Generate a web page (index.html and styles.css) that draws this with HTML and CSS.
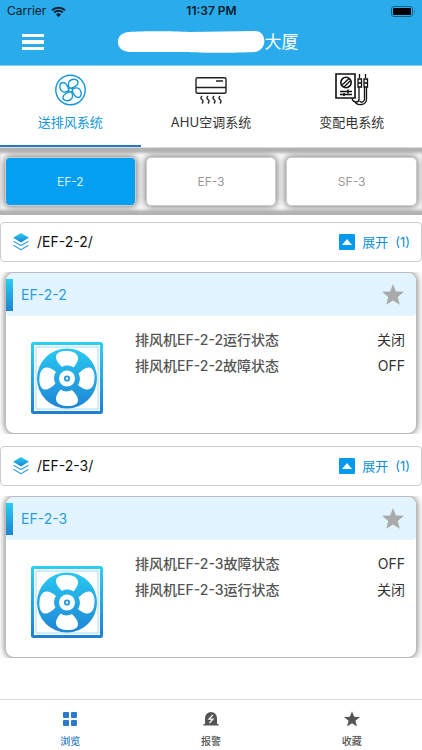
FILE: index.html
```html
<!DOCTYPE html>
<html lang="zh-CN">
<head>
<meta charset="utf-8">
<meta name="viewport" content="width=device-width, initial-scale=1">
<title>大厦</title>
<link rel="stylesheet" href="styles.css">
</head>
<body>
<svg class="defs" aria-hidden="true">
  <defs>
    <linearGradient id="blue" x1="0" y1="0" x2="0" y2="1"><stop offset="0" stop-color="#2bd0f3"/><stop offset="1" stop-color="#1e7fd3"/></linearGradient>
    <linearGradient id="fanblue" gradientUnits="userSpaceOnUse" x1="0" y1="0" x2="0" y2="72"><stop offset="0" stop-color="#2bd0f3"/><stop offset="1" stop-color="#1e7fd3"/></linearGradient>
    <symbol id="star" viewBox="0 0 22 21"><path d="M11 0l2.9 7.4 8.1.4-6.300 5.100 2.100 7.900L11 16.400 4.200 20.800l2.100-7.900L0 7.800l8.100-.4z"/></symbol>
    <symbol id="layers" viewBox="0 0 16 18">
      <path fill="url(#blue)" d="M8 0l8 4.700-8 4.700-8-4.700z"/>
      <path fill="none" stroke="#3fa5e4" stroke-width="1.300" d="M.5 8.300L8 12.600l7.500-4.300M.5 12.300L8 16.800l7.500-4.500"/>
    </symbol>
    <symbol id="fan" viewBox="0 0 72 72">
      <rect x="1.500" y="1.500" width="69" height="69" rx="1" fill="#fff" stroke="url(#fanblue)" stroke-width="3"/>
      <rect x="5" y="5" width="62" height="62" fill="none" stroke="#a5dcf6"/>
      <circle cx="36" cy="36.500" r="30" fill="url(#fanblue)"/>
      <g fill="#fff">
        <path id="blade" d="M31 25C28 22 24.500 18 25 14 26 9.500 32 8.500 37 9 43 9.500 47.500 12 47 17 46.500 20 45 22.500 42.500 25.500 39 23 34.500 23 31 25z"/>
        <use href="#blade" transform="rotate(90 36 36.500)"/>
        <use href="#blade" transform="rotate(180 36 36.500)"/>
        <use href="#blade" transform="rotate(270 36 36.500)"/>
      </g>
      <circle cx="36" cy="36.500" r="9.500" fill="#fff" stroke="url(#fanblue)" stroke-width="3"/>
      <circle cx="36" cy="36.500" r="2.200" fill="#fff" stroke="#2598dc" stroke-width="1.800"/>
    </symbol>
    <symbol id="toggle" viewBox="0 0 16 16"><rect width="16" height="16" rx="1" fill="#049bee"/><path fill="#fff" d="M8 5l5 6H3z"/></symbol>
  </defs>
</svg>

<header class="top">
  <div class="status">
    <span class="carrier">Carrier
      <svg width="15" height="11" viewBox="0 0 15 11" aria-hidden="true"><path d="M1 4.200a9.500 9.500 0 0 1 13 0M3.300 6.500a6 6 0 0 1 8.400 0" fill="none" stroke="#071c29" stroke-width="2"/><path d="M7.500 11L5 8.400a3.600 3.600 0 0 1 5 0z" fill="#071c29"/></svg>
    </span>
    <span class="clock">11:37 PM</span>
    <svg class="battery" width="25" height="11" viewBox="0 0 25 11" aria-hidden="true"><rect x=".5" y=".5" width="21" height="10" rx="2.500" fill="none" stroke="#176087"/><rect x="2" y="2" width="18" height="7" rx="1"/><path d="M23 4v3.500q1.500-1.700 0-3.500" fill="#176087"/></svg>
  </div>
  <div class="titlebar">
    <button class="menu" type="button" aria-label="菜单"><svg width="22" height="16" viewBox="0 0 22 16"><path fill="#fff" d="M0 0h22v3H0zM0 6h22v4H0zM0 13h22v3H0z"/></svg></button>
    <h1><svg width="147" height="22" viewBox="0 0 147 22" aria-hidden="true"><path fill="#fff" d="M11 1C25 0 55 0 71 1l66-1c12 0 13 19 0 21-18 1-53 1-71 0L11 21C-4 20-4 2 11 1z"/></svg>大厦</h1>
  </div>
</header>

<main>
  <nav class="tabs">
    <a class="tab active" href="#fans">
      <svg width="34" height="34" viewBox="0 0 34 34" fill="none" stroke="#1296db" stroke-width="1.400" aria-hidden="true">
        <circle cx="17.500" cy="17" r="14.700"/><circle cx="17.500" cy="17" r="2"/>
        <path id="leaf" d="M16.500 15C15 12 15 8.500 18 7c3-1.500 7-.5 7 2.500 0 3-3 4.500-6.500 5.700"/><use href="#leaf" transform="rotate(90 17.500 17)"/><use href="#leaf" transform="rotate(180 17.500 17)"/><use href="#leaf" transform="rotate(270 17.500 17)"/>
      </svg>
      <span>送排风系统</span>
    </a>
    <a class="tab" href="#ahu">
      <svg width="34" height="34" viewBox="0 0 34 34" fill="none" stroke="#222" stroke-width="1.400" aria-hidden="true">
        <rect x="2" y="4.700" width="30" height="15.500" rx="1.500"/><path d="M2 14.500h30M22 8h7"/>
        <path d="M8 23q-2 2 0 3.500t0 4M14 23q-2 2 0 3.500t0 4M20 23q-2 2 0 3.500t0 4M26 23q-2 2 0 3.500t0 4"/>
      </svg>
      <span>AHU空调系统</span>
    </a>
    <a class="tab" href="#power">
      <svg width="34" height="34" viewBox="0 0 34 34" fill="none" stroke="#111" stroke-width="1.600" aria-hidden="true">
        <path d="M1 1h19v24H1z"/><circle cx="11" cy="9.500" r="5.200"/><path d="M7 12l7-6.500M9 14l6-6M5 18.500h12M5 21.500h12" stroke-width="1.300"/><path d="M13 16.500v4M9 20v3"/>
        <path d="M24.500 1v4M30.500 1v4M23 6h3.500v8H23zM29 6h3.500v8H29zM23 10h3.500M29 10h3.500M24 14v12q0 3-3 3t-4-3.500M31.500 14v12c0 7-10 7-12 2M29.500 14v12c0 3-3 4-5 2" stroke-width="1.300"/>
      </svg>
      <span>变配电系统</span>
    </a>
  </nav>

  <div class="groups">
    <button class="group selected" type="button">EF-2</button>
    <button class="group" type="button">EF-3</button>
    <button class="group" type="button">SF-3</button>
  </div>

  <section class="unit">
    <div class="path">
      <svg class="layers" aria-hidden="true"><use href="#layers"/></svg>
      <h2>/EF-2-2/</h2>
      <button class="expand" type="button"><svg aria-hidden="true"><use href="#toggle"/></svg><span>展开</span><span>(1)</span></button>
    </div>
    <div class="frame">
      <article class="card">
        <header class="card-head"><h3>EF-2-2</h3><button class="fav" type="button" aria-label="收藏 EF-2-2"><svg><use href="#star"/></svg></button></header>
        <div class="card-body">
          <svg class="fan" aria-hidden="true"><use href="#fan"/></svg>
          <dl>
            <div><dt>排风机EF-2-2运行状态</dt><dd>关闭</dd></div>
            <div><dt>排风机EF-2-2故障状态</dt><dd>OFF</dd></div>
          </dl>
        </div>
      </article>
    </div>
  </section>

  <section class="unit">
    <div class="path">
      <svg class="layers" aria-hidden="true"><use href="#layers"/></svg>
      <h2>/EF-2-3/</h2>
      <button class="expand" type="button"><svg aria-hidden="true"><use href="#toggle"/></svg><span>展开</span><span>(1)</span></button>
    </div>
    <div class="frame">
      <article class="card">
        <header class="card-head"><h3>EF-2-3</h3><button class="fav" type="button" aria-label="收藏 EF-2-3"><svg><use href="#star"/></svg></button></header>
        <div class="card-body">
          <svg class="fan" aria-hidden="true"><use href="#fan"/></svg>
          <dl>
            <div><dt>排风机EF-2-3故障状态</dt><dd>OFF</dd></div>
            <div><dt>排风机EF-2-3运行状态</dt><dd>关闭</dd></div>
          </dl>
        </div>
      </article>
    </div>
  </section>
</main>

<nav class="bottom">
  <a class="active" href="#browse"><svg width="16" height="16" viewBox="0 0 16 16" fill="currentColor" aria-hidden="true"><rect x="1" y="1" width="6" height="6" rx="1"/><rect x="9" y="1" width="6" height="6" rx="1"/><rect x="1" y="9" width="6" height="6" rx="1"/><rect x="9" y="9" width="6" height="6" rx="1"/></svg>浏览</a>
  <a href="#alarm"><svg width="16" height="16" viewBox="0 0 16 16" fill="currentColor" aria-hidden="true"><path d="M2 13V7a6 6 0 0 1 12 0v6h1.500v1.500H.5V13z"/><path d="M9.800 4L6 8.200h4L6.500 12" fill="none" stroke="#fff" stroke-width="1.200"/></svg>报警</a>
  <a href="#favorites"><svg width="16" height="16" fill="currentColor" aria-hidden="true"><use href="#star"/></svg>收藏</a>
</nav>
</body>
</html>
```

FILE: styles.css
```css
* { box-sizing: border-box; }

body {
  display: flex;
  flex-direction: column;
  min-height: 100vh;
  margin: 0;
  background: #fff;
  color: #333;
  font-family: Inter, "Noto Sans CJK SC", sans-serif;
  font-size: 14px;
  line-height: 20px;
}

h1, h2, h3, dl, dd { margin: 0; font-weight: 400; font-size: inherit; }
button { border: 0; padding: 0; background: none; color: inherit; font: inherit; }
a { color: inherit; text-decoration: none; }
svg { flex: none; }
.defs { position: absolute; width: 0; height: 0; }

.top {
  background: #29abec;
  border-bottom: 1px solid #84d6fc;
}

.status {
  display: grid;
  grid-template-columns: 1fr auto 1fr;
  align-items: center;
  padding: 0 6px 0 7px;
  height: 22px;
  color: #071c29;
  font-size: 12px;
}
.carrier { display: flex; align-items: center; gap: 5px; }
.clock { font-weight: 600; }
.battery { justify-self: end; }

.titlebar {
  display: grid;
  grid-template-columns: 1fr auto 1fr;
  align-items: center;
  height: 43px;
  padding: 0 28px 4px 22px;
}
.menu { display: flex; justify-self: start; }
.titlebar h1 {
  display: flex;
  align-items: center;
  color: #fff;
  font-size: 17px;
}

.tabs { display: grid; grid-template-columns: repeat(3, 1fr); }
.tab {
  display: flex;
  flex-direction: column;
  align-items: center;
  gap: 5px;
  padding: 7px 0 13px;
  border-bottom: 2px solid transparent;
  font-size: 13px;
}
.tab.active { color: #1296db; border-color: #2878c2; }

.groups {
  display: grid;
  grid-template-columns: repeat(3, 1fr);
  gap: 10px;
  padding: 9px 5px;
  overflow: hidden;
  border-top: 1px solid #ddd;
  box-shadow: inset 0 6px 3px -1px #b3b3b3, inset 0 -6px 3px -1px #b3b3b3;
}
.group {
  height: 49px;
  border: 1px solid #ccc;
  border-radius: 5px;
  background: #fff;
  box-shadow: 0 0 7px 1px #777;
  color: #999;
  font-size: 12px;
}
.group.selected { background: #049ff1; color: #d5effc; }

.unit { margin-top: 7px; margin-bottom: 12px; }
.path {
  display: flex;
  align-items: center;
  gap: 8px;
  height: 40px;
  padding: 0 11px 0 12px;
  border: 1px solid #ccc;
  border-radius: 4px;
  color: #111;
}
.layers { width: 16px; height: 18px; }
.path h2 { flex: 1; }
.expand {
  display: flex;
  align-items: center;
  gap: 7px;
  color: #0c8fdd;
  font-size: 13px;
}
.expand svg { width: 16px; height: 16px; }

.frame {
  margin-top: 10px;
  padding: 0 5px;
  overflow: hidden;
}
.card {
  border: 1px solid #bbb;
  border-radius: 9px;
  background: #fff;
  box-shadow: 0 0 7px #777;
}
.card-head {
  display: flex;
  align-items: center;
  justify-content: space-between;
  height: 43px;
  padding: 0 12px 0 0;
  border-radius: 8px 8px 4px 4px;
  background: #e1f4ff;
}
.card-head h3 {
  padding: 6px 8px;
  border-left: 7px solid;
  border-image: linear-gradient(#2bd0f3, #1e7fd3) 1;
  color: #2b9edc;
}
.fav { display: flex; color: #aaa; }
.fav svg { width: 22px; height: 21px; fill: currentColor; }
.card-body {
  display: flex;
  gap: 32px;
  padding: 11px 11px 19px 25px;
}
.fan { width: 72px; height: 72px; margin-top: 15px; }
.card-body dl { flex: 1; }
.card-body dl div {
  display: flex;
  justify-content: space-between;
  line-height: 26px;
}
.card-body dt { color: #555; font-weight: 500; }

.bottom {
  display: grid;
  grid-template-columns: repeat(3, 1fr);
  margin-top: auto;
  border-top: 1px solid #ddd;
  color: #555;
  font-size: 10px;
  font-weight: 500;
}
.bottom a {
  display: flex;
  flex-direction: column;
  align-items: center;
  gap: 5px;
  padding: 11px 0 0;
  line-height: 18px;
}
.bottom .active { color: #2979ce; }
```
